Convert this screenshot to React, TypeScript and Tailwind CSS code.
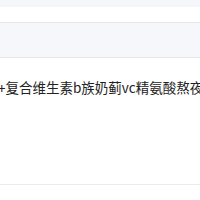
export default function App() {
  return (
    <div className="w-[200px] h-[200px] overflow-hidden bg-white" style={{ fontFamily: '"Noto Sans CJK SC", "Liberation Sans", sans-serif' }}>
      <div className="h-[7px] bg-[#f5f6fa]" />
      <div className="h-[16px] bg-white border-b border-[#e6e6ec]" />
      <div className="h-[35px] bg-[#f6f7fb] border-b border-[#e6e6ec]" />
      <div className="h-[127px] border-b border-[#ececec] overflow-hidden">
        <div className="mt-[19px] -ml-[2px] whitespace-nowrap text-[13.5px] leading-[20px] text-[#222]">
          +复合维生素b族奶蓟vc精氨酸熬夜
        </div>
      </div>
    </div>
  );
}
